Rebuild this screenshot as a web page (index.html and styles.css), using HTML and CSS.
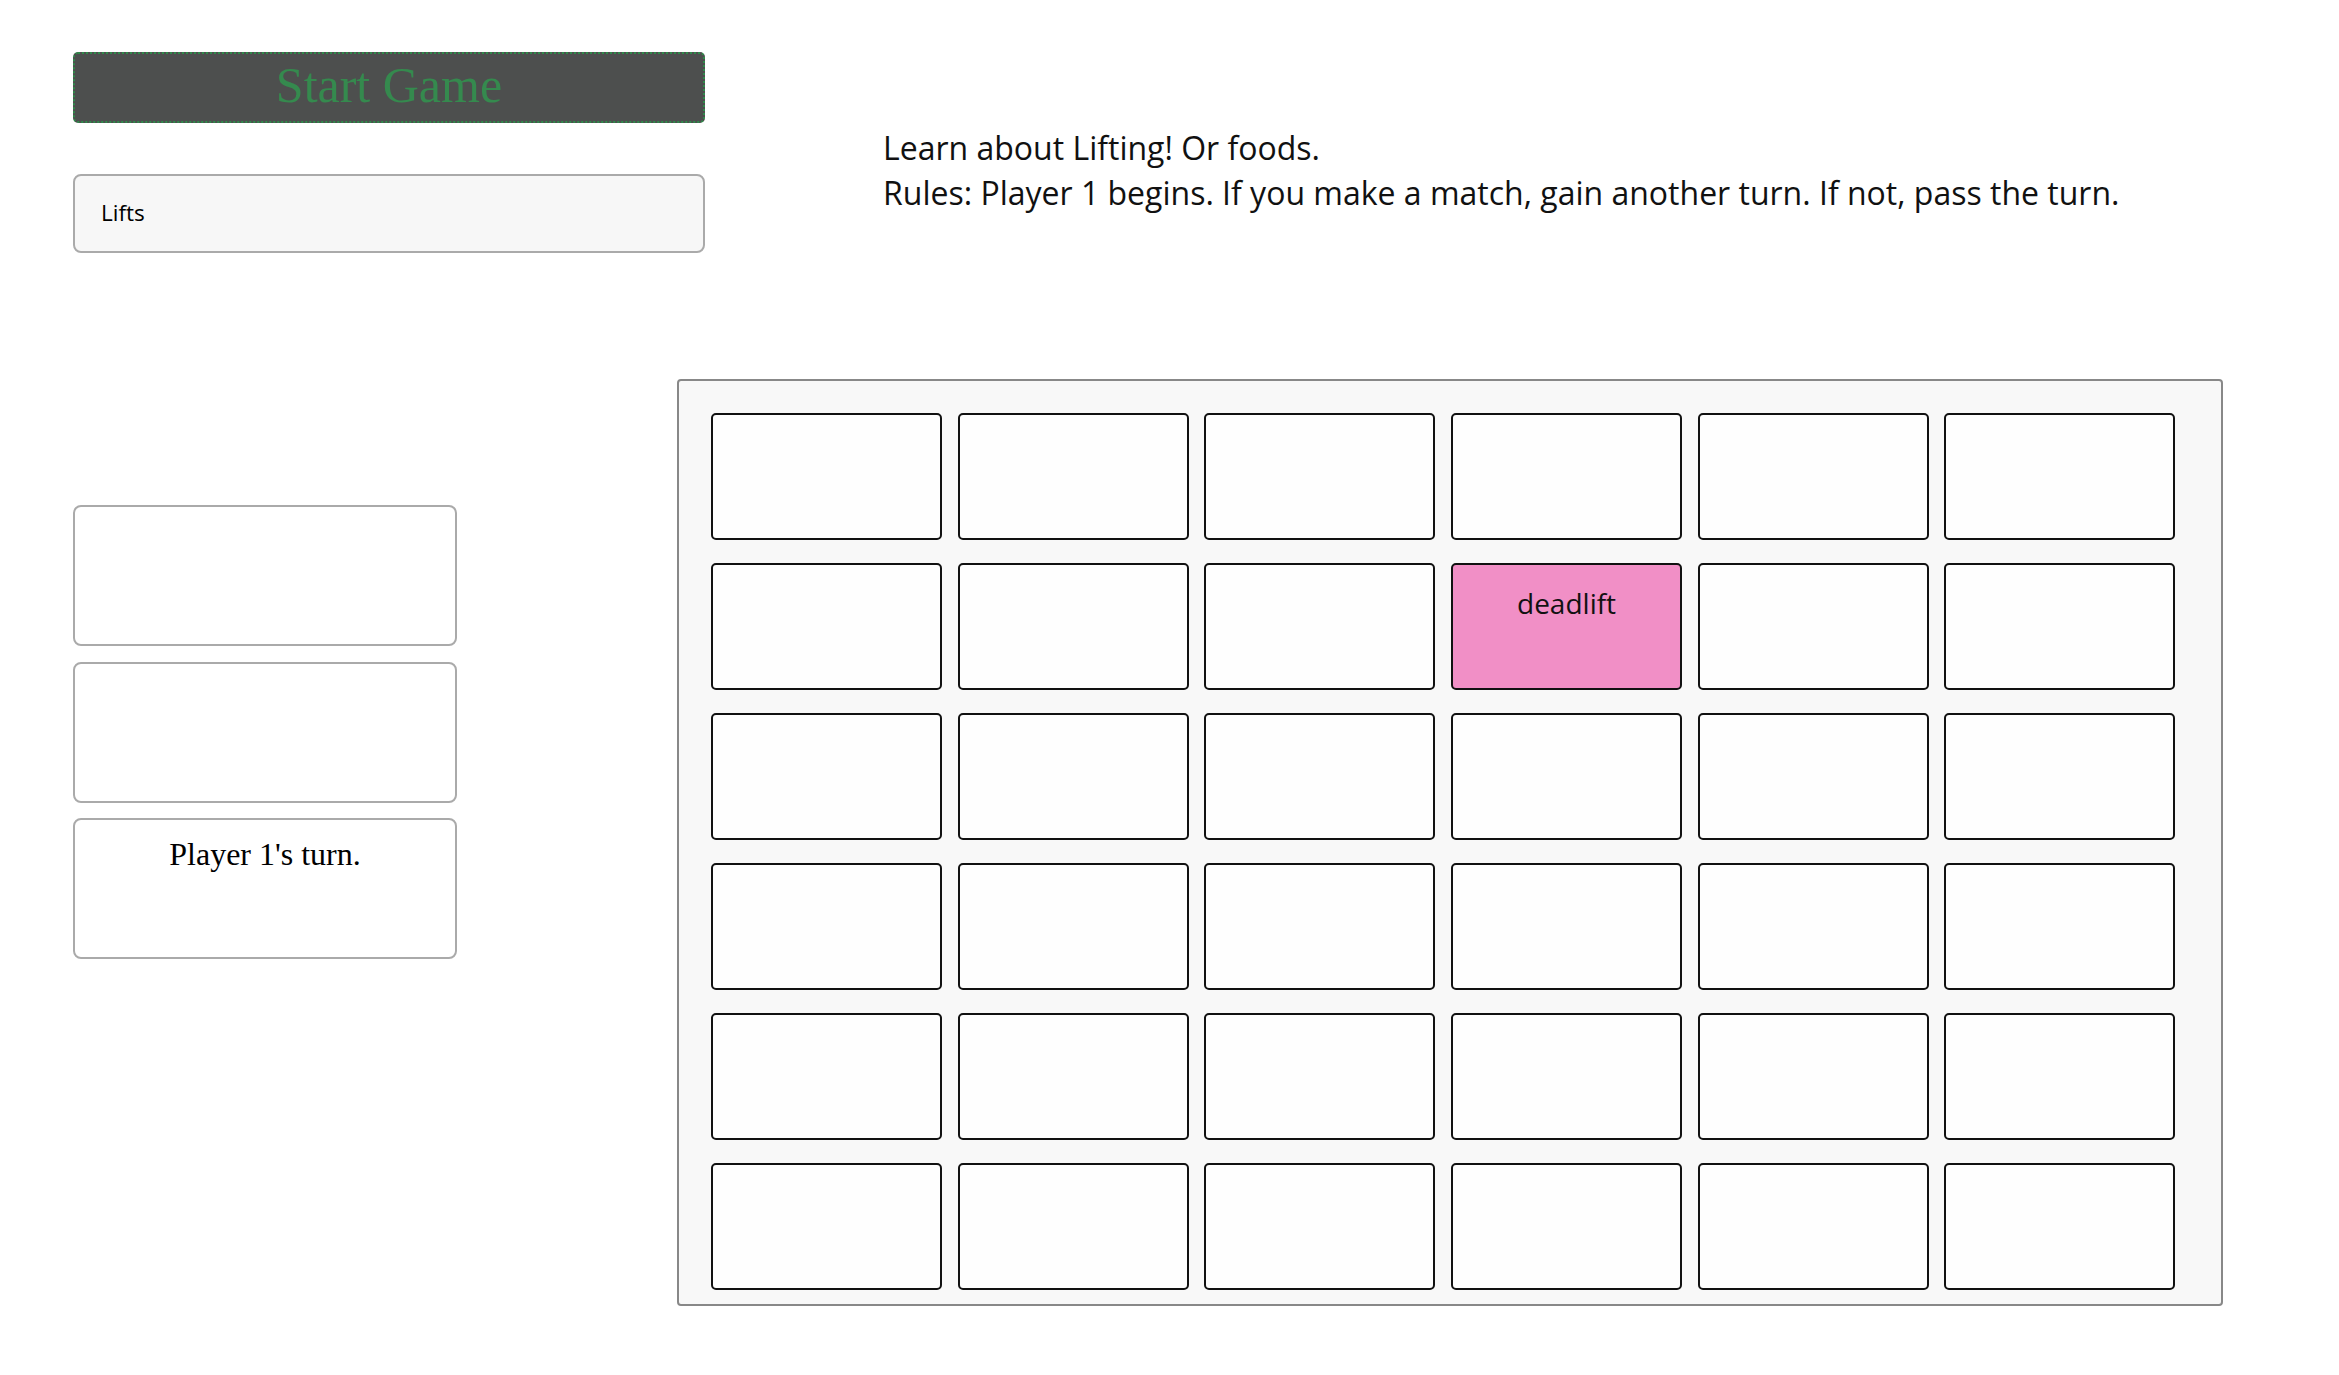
FILE: index.html
```html
<!DOCTYPE html>
<html>
<head>
<meta charset="utf-8">
<title>Memory Game</title>
<link rel="stylesheet" href="styles.css">
</head>
<body>
<div class="top">
  <div class="controls">
    <button class="start">Start Game</button>
    <select class="topic"><option>Lifts</option></select>
  </div>
  <div class="intro">
    <div>Learn about Lifting! Or foods.</div>
    <div>Rules: Player 1 begins. If you make a match, gain another turn. If not, pass the turn.</div>
  </div>
</div>
<div class="main">
  <div class="status">
    <div class="box"></div>
    <div class="box"></div>
    <div class="box"><div class="turn">Player 1's turn.</div></div>
  </div>
  <div class="board">
    <div class="card"></div><div class="card"></div><div class="card"></div><div class="card"></div><div class="card"></div><div class="card"></div>
    <div class="card"></div><div class="card"></div><div class="card"></div><div class="card flipped">deadlift</div><div class="card"></div><div class="card"></div>
    <div class="card"></div><div class="card"></div><div class="card"></div><div class="card"></div><div class="card"></div><div class="card"></div>
    <div class="card"></div><div class="card"></div><div class="card"></div><div class="card"></div><div class="card"></div><div class="card"></div>
    <div class="card"></div><div class="card"></div><div class="card"></div><div class="card"></div><div class="card"></div><div class="card"></div>
    <div class="card"></div><div class="card"></div><div class="card"></div><div class="card"></div><div class="card"></div><div class="card"></div>
  </div>
</div>
</body>
</html>
```
FILE: styles.css
```css
html, body {
  margin: 0;
  padding: 0;
  background: #ffffff;
}
body {
  font-family: "Liberation Serif", serif;
  color: #000;
}
.top {
  display: flex;
  padding: 52px 0 0 73px;
}
.controls {
  display: flex;
  flex-direction: column;
  width: 632px;
  gap: 51px;
}
.start {
  box-sizing: border-box;
  height: 71px;
  width: 632px;
  background: #4d4f4e;
  border: 2px dotted #2f8a4a;
  border-radius: 5px;
  color: #358a4e;
  font-family: "Liberation Serif", serif;
  font-size: 50px;
  line-height: 1;
  padding: 0 0 5px 0;
}
.topic {
  box-sizing: border-box;
  appearance: none;
  -webkit-appearance: none;
  height: 79px;
  width: 632px;
  background: #f7f7f7;
  border: 2px solid #aaaaaa;
  border-radius: 8px;
  padding: 0 0 2px 26px;
  font-family: "Open Sans", sans-serif;
  font-size: 22.5px;
  color: #000;
}
.intro {
  margin: 73px 0 0 178px;
  font-family: "Open Sans", sans-serif;
  font-size: 32px;
  line-height: 45px;
  color: #111;
}
.main {
  display: flex;
  align-items: flex-start;
  margin-top: 126px;
}
.status {
  display: flex;
  flex-direction: column;
  gap: 15.5px;
  width: 384px;
  margin: 126px 0 0 73px;
}
.box {
  box-sizing: border-box;
  height: 141px;
  border: 2px solid #aaaaaa;
  border-radius: 8px;
  background: #fff;
}
.turn {
  padding-top: 16px;
  text-align: center;
  font-family: "Liberation Serif", serif;
  font-size: 32px;
}
.board {
  box-sizing: border-box;
  width: 1546px;
  height: 927px;
  margin-left: 220px;
  background: #f8f8f8;
  border: 2px solid #888888;
  border-radius: 4px;
  padding: 32px 0 0 32px;
  display: grid;
  grid-template-columns: repeat(6, 231px);
  grid-auto-rows: 127px;
  column-gap: 15.7px;
  row-gap: 23px;
  align-content: start;
}
.card {
  box-sizing: border-box;
  border: 2px solid #111;
  border-radius: 5px;
  background: #fefefe;
  text-align: center;
  font-family: "Open Sans", sans-serif;
  font-size: 28px;
  color: #111;
  padding-top: 19px;
}
.card.flipped {
  background: #f18fc6;
}
```
